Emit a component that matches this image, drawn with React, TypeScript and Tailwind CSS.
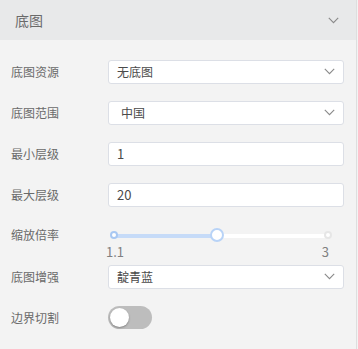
import React from "react";

const Chevron = ({ className = "" }: { className?: string }) => (
  <svg width="11" height="7" viewBox="0 0 11 7" className={className} fill="none">
    <path d="M0.8 0.8 L5.5 5.6 L10.2 0.8" stroke="#8a8a8a" strokeWidth="1.1" />
  </svg>
);

const Label = ({ children }: { children: React.ReactNode }) => (
  <div className="w-[97px] shrink-0 text-[12px] leading-none text-[#6a6a6a]">{children}</div>
);

const SelectBox = ({ value, indent = false }: { value: string; indent?: boolean }) => (
  <div className="flex h-[24px] w-[236px] items-center justify-between rounded-[3px] border border-[#dcdfe6] bg-white pl-[8px] pr-[8px]">
    <span className={`text-[12px] leading-none text-[#4a4a4a] ${indent ? "pl-[4px]" : ""}`}>{value}</span>
    <Chevron />
  </div>
);

const InputBox = ({ value }: { value: string }) => (
  <div className="flex h-[24px] w-[236px] items-center rounded-[3px] border border-[#dcdfe6] bg-white pl-[8px]">
    <span className="text-[13px] leading-none text-[#4a4a4a]">{value}</span>
  </div>
);

const Row = ({ children }: { children: React.ReactNode }) => (
  <div className="flex h-[41px] items-center pl-[11px]">{children}</div>
);

export default function App() {
  return (
    <div
      className="h-[349px] w-[358px] bg-[#f3f3f3]"
      style={{ fontFamily: '"Noto Sans CJK SC", "Noto Sans", sans-serif' }}
    >
      <div className="h-full w-[357px] border-r border-[#dedede]">
        <div className="flex h-[40px] items-center justify-between bg-[#e8e9ea] pl-[15px] pr-[17px]">
          <span className="text-[14px] leading-none text-[#6a6a6a]">底图</span>
          <Chevron />
        </div>
        <div className="pt-[11px]">
          <Row>
            <Label>底图资源</Label>
            <SelectBox value="无底图" />
          </Row>
          <Row>
            <Label>底图范围</Label>
            <SelectBox value="中国" indent />
          </Row>
          <Row>
            <Label>最小层级</Label>
            <InputBox value="1" />
          </Row>
          <Row>
            <Label>最大层级</Label>
            <InputBox value="20" />
          </Row>
          <div className="flex h-[41px] items-start pl-[11px]">
            <div className="pt-[14px]">
              <Label>缩放倍率</Label>
            </div>
            <div className="flex w-[236px] flex-col pt-[14px]">
              <div className="relative ml-[2px] h-[13px] w-[222px]">
                <div className="absolute left-[4px] right-[4px] top-[5px] h-[4px] rounded-full bg-white" />
                <div className="absolute left-[4px] top-[5px] h-[4px] w-[102px] bg-[#c6dbf8]" />
                <div className="absolute left-[0px] top-[2px] h-[8px] w-[8px] rounded-full border-[2px] border-[#a9c8f2] bg-white" />
                <div className="absolute left-[100px] top-[-1px] h-[14px] w-[14px] rounded-full border-[2px] border-[#b8d3f7] bg-white" />
                <div className="absolute right-[0px] top-[2px] h-[8px] w-[8px] rounded-full border-[2px] border-[#e6e6e6] bg-white" />
              </div>
              <div className="ml-[-2px] mt-[3px] flex w-[223px] justify-between text-[13px] leading-none text-[#808080]">
                <span>1.1</span>
                <span>3</span>
              </div>
            </div>
          </div>
          <Row>
            <Label>底图增强</Label>
            <SelectBox value="靛青蓝" />
          </Row>
          <Row>
            <Label>边界切割</Label>
            <div className="flex h-[23px] w-[44px] items-center rounded-full bg-[#bdbdbd] pl-[2px]">
              <div className="h-[19px] w-[19px] rounded-full bg-white shadow-[0_1px_2px_rgba(0,0,0,0.3)]" />
            </div>
          </Row>
        </div>
      </div>
    </div>
  );
}
